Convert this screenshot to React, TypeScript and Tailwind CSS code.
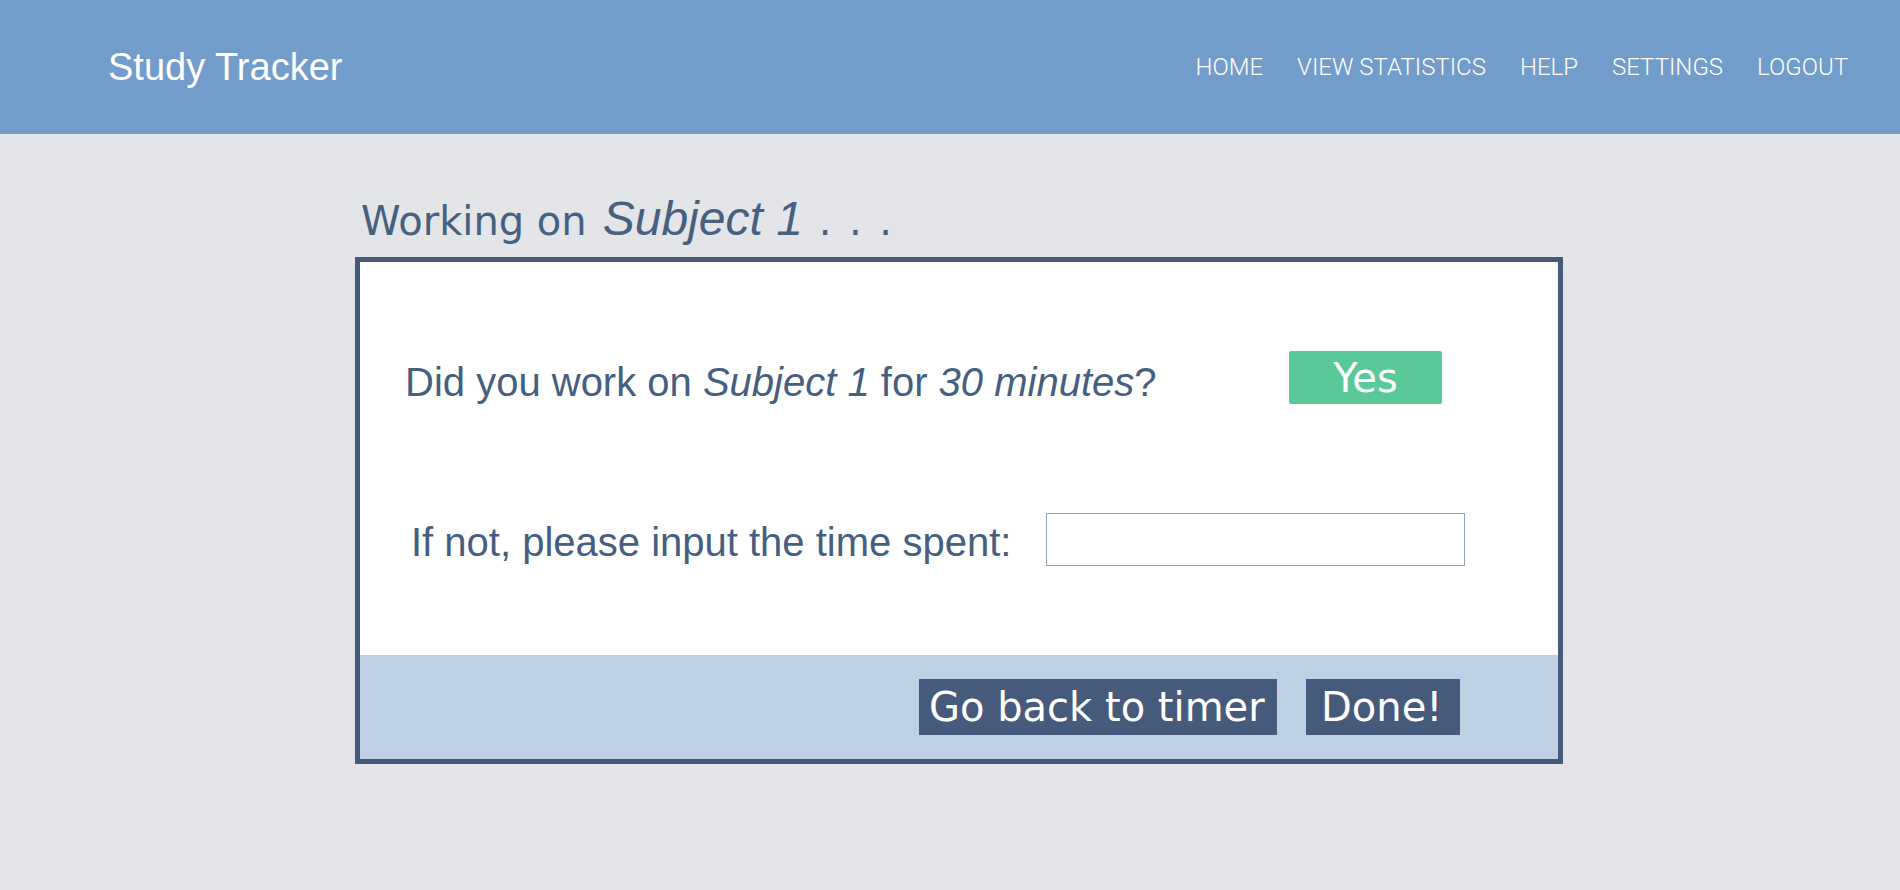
import { useState } from 'react'

const navItems = ['HOME', 'VIEW STATISTICS', 'HELP', 'SETTINGS', 'LOGOUT']

export default function App() {
  const [timeSpent, setTimeSpent] = useState('')

  return (
    <div className="min-h-screen bg-[#e3e5e9] font-['Liberation_Sans',Arial,sans-serif]">
      <header className="h-[134px] bg-[#729dca] flex items-center justify-between pl-[108px] pr-[52px]">
        <div className="text-[38px] leading-none text-white">Study Tracker</div>
        <nav className="flex items-center gap-[34px] font-['Roboto',sans-serif] text-[24px] font-light leading-none text-white">
          {navItems.map((item) => (
            <a key={item} href="#" className="hover:underline">
              {item}
            </a>
          ))}
        </nav>
      </header>

      <main className="ml-[355px] w-[1208px]">
        <h1 className="mt-[61px] ml-[6px] flex items-baseline font-['DejaVu_Sans',Verdana,sans-serif] text-[40px] leading-none text-[#48607f]">
          <span>Working on</span>
          <span className="ml-[16px] font-['Liberation_Sans',Arial,sans-serif] text-[48px] italic leading-none">Subject 1</span>
          <span className="ml-[16px] tracking-[2.4px]">. . .</span>
        </h1>

        <div className="mt-[14px] h-[507px] border-[5px] border-[#475a7b] flex flex-col">
          <div className="flex-1 bg-white pt-[89px]">
            <div className="flex items-start pl-[45px] pr-[116px]">
              <p className="mt-[11px] text-[40px] leading-none text-[#465e80]">
                Did you work on <i>Subject 1</i> for <i>30 minutes</i>?
              </p>
              <button className="ml-auto w-[153px] h-[53px] rounded-[2px] bg-[#5ac99a] font-['DejaVu_Sans',Verdana,sans-serif] text-[40px] leading-none text-white">
                Yes
              </button>
            </div>

            <div className="mt-[109px] flex items-start pl-[51px]">
              <label className="mt-[9px] text-[40px] leading-none text-[#465e80]">
                If not, please input the time spent:
              </label>
              <input
                type="text"
                value={timeSpent}
                onChange={(e) => setTimeSpent(e.target.value)}
                className="ml-[35px] w-[419px] h-[53px] border border-[#8fa3ba] bg-white px-3 text-[28px] text-[#465e80] outline-none"
              />
            </div>
          </div>

          <div className="h-[104px] bg-[#bdd0e4] flex items-center justify-end gap-[29px] pr-[98px]">
            <button className="w-[358px] h-[56px] bg-[#465a7b] pl-[10px] text-left font-['DejaVu_Sans',Verdana,sans-serif] text-[40px] leading-none text-white">
              Go back to timer
            </button>
            <button className="w-[154px] h-[56px] bg-[#465a7b] pl-[15px] text-left font-['DejaVu_Sans',Verdana,sans-serif] text-[40px] leading-none text-white">
              Done!
            </button>
          </div>
        </div>
      </main>
    </div>
  )
}
